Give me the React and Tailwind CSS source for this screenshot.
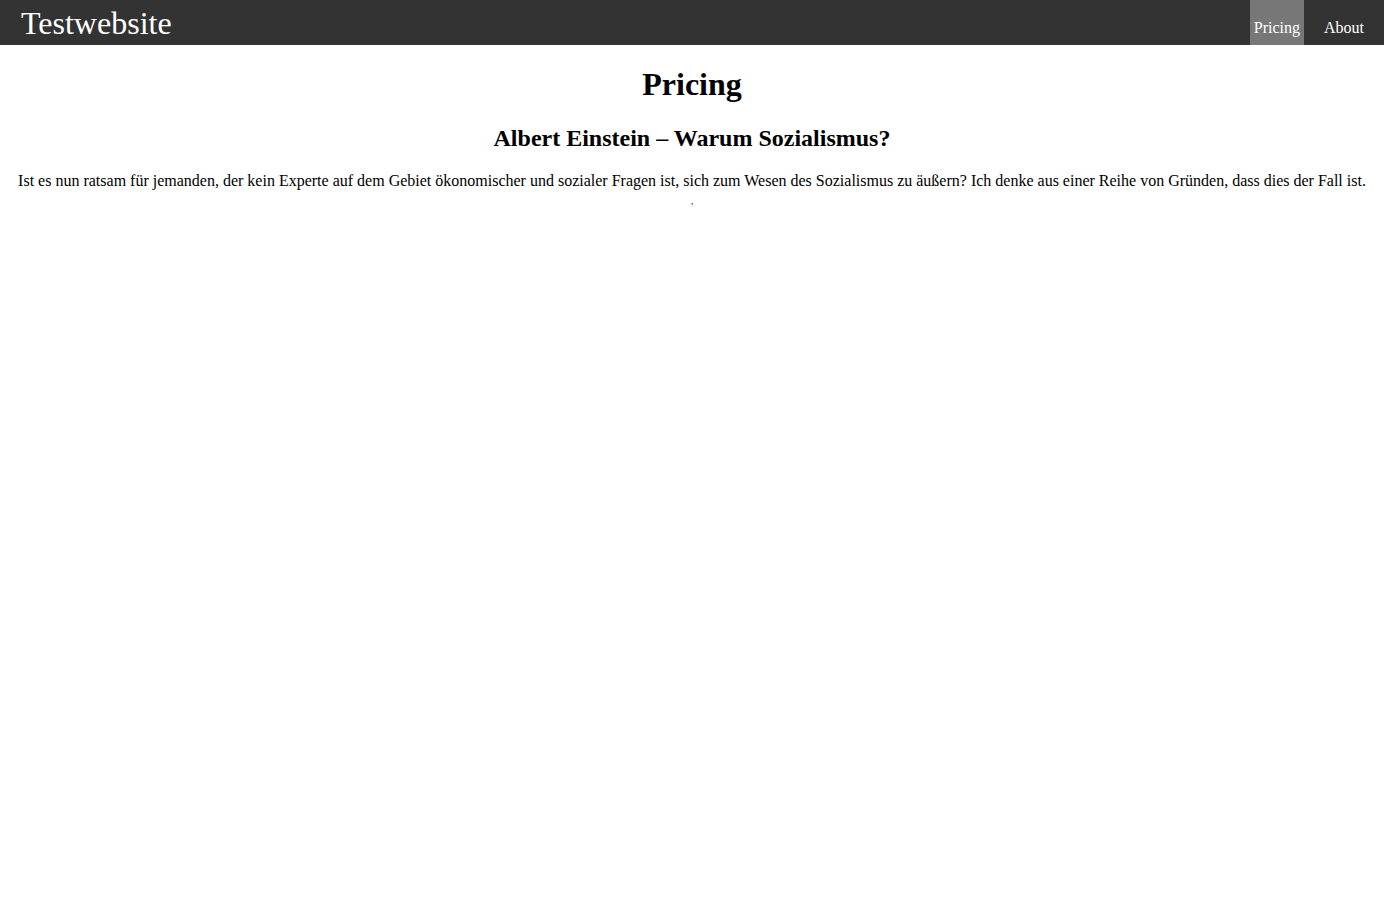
export default function App() {
  return (
    <div className="min-h-screen bg-white text-black font-['Liberation_Serif',serif]">
      <nav className="flex h-[45px] items-stretch justify-between bg-[#333333] text-white">
        <div className="flex items-center pl-[21px] text-[32px] leading-none">Testwebsite</div>
        <div className="flex items-stretch text-[16px]">
          <a className="flex items-end bg-[#777777] px-[4px] pb-[5px]">Pricing</a>
          <a className="flex items-end px-[20px] pb-[5px]">About</a>
        </div>
      </nav>
      <main className="text-center">
        <h1 className="mt-[21px] text-[32px] font-bold leading-[37px]">Pricing</h1>
        <h2 className="mt-[21px] text-[24px] font-bold leading-[28px]">Albert Einstein – Warum Sozialismus?</h2>
        <p className="mt-[20px] text-[16px] leading-[18px]">
          Ist es nun ratsam für jemanden, der kein Experte auf dem Gebiet ökonomischer und sozialer Fragen ist, sich zum Wesen des Sozialismus zu äußern? Ich denke aus einer Reihe von Gründen, dass dies der Fall ist.
        </p>
        <p className="mt-[6px] text-[9px] leading-[10px]">,</p>
      </main>
    </div>
  );
}
